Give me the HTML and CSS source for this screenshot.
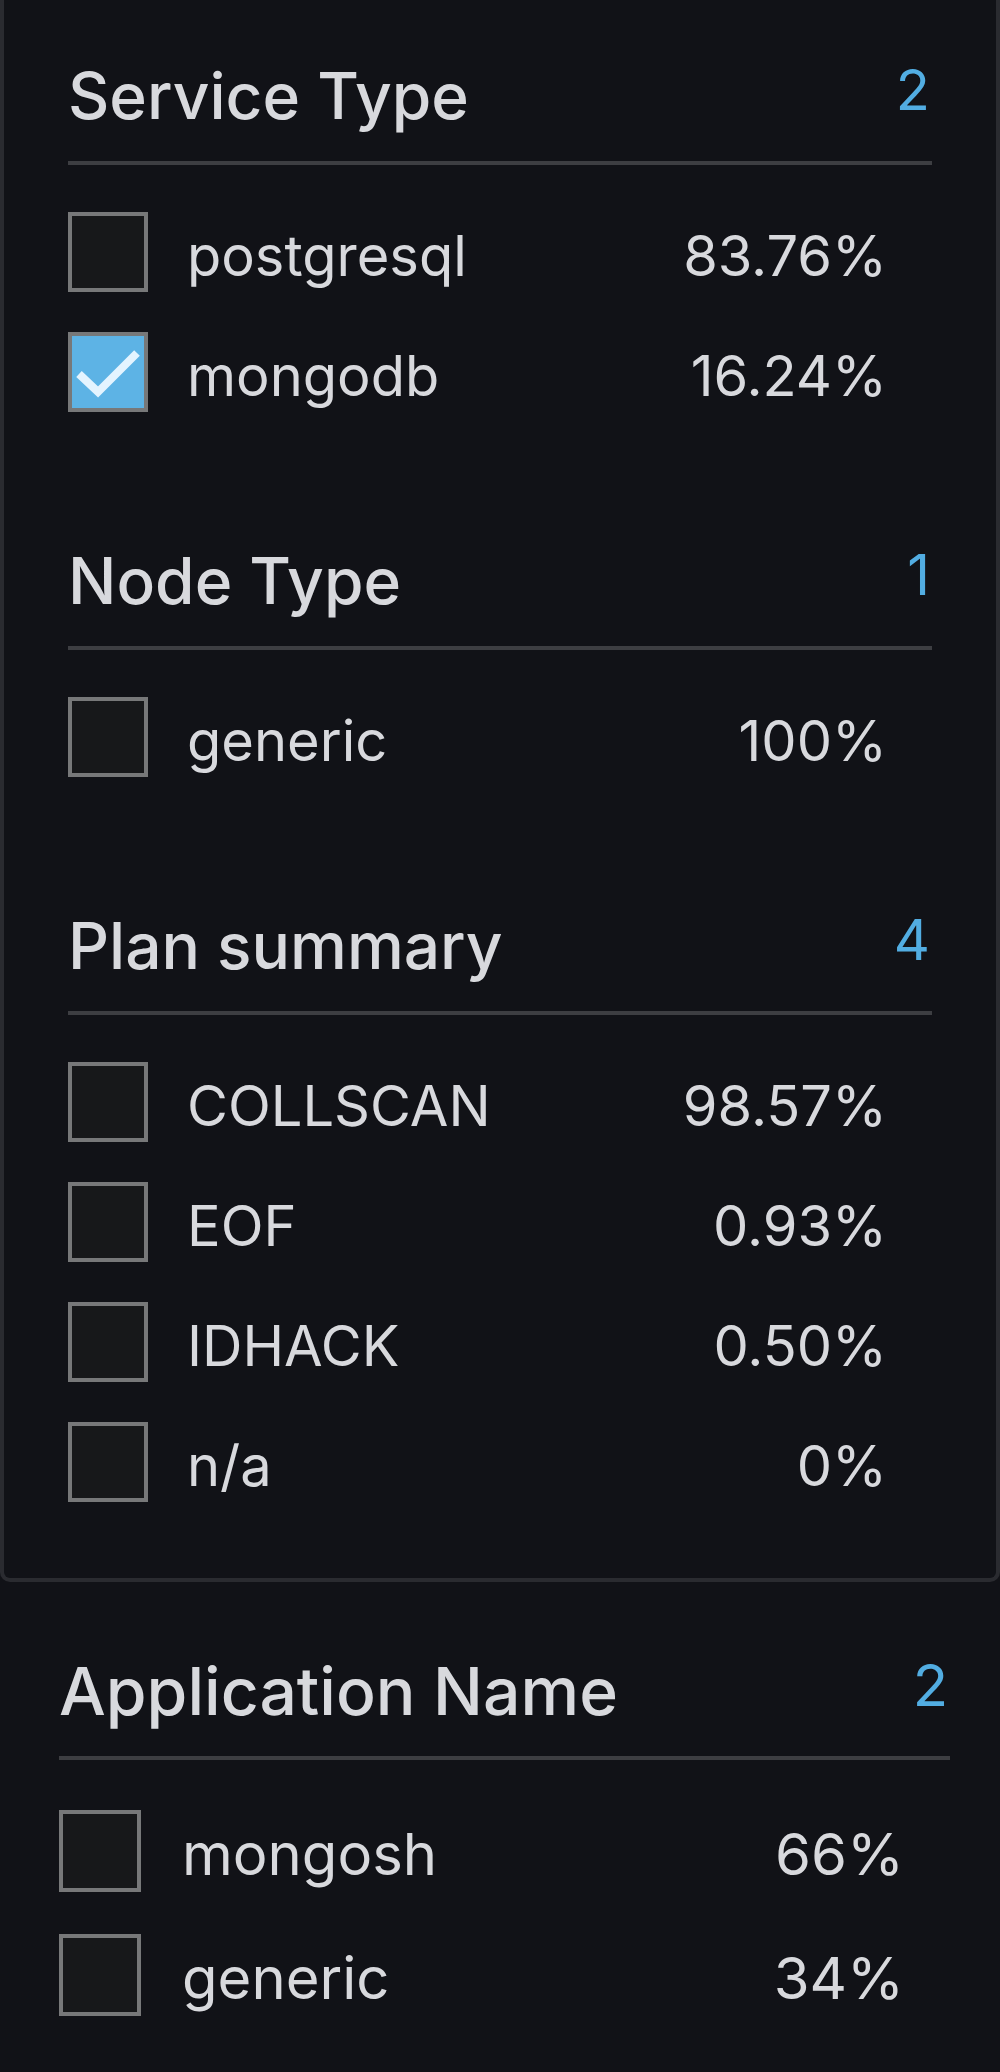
FILE: index.html
```html
<!DOCTYPE html>
<html>
<head>
<meta charset="utf-8">
<link rel="stylesheet" href="styles.css">
</head>
<body>
<div class="panel">
  <section class="group">
    <div class="group-head">
      <span class="group-title">Service Type</span>
      <span class="group-count">2</span>
    </div>
    <ul class="options">
      <li class="option"><span class="box"></span><span class="label">postgresql</span><span class="pct">83.76%</span></li>
      <li class="option"><span class="box checked"><svg viewBox="0 0 72 72" class="tick"><path d="M7 38 L26 56 L65 17" /></svg></span><span class="label">mongodb</span><span class="pct">16.24%</span></li>
    </ul>
  </section>
  <section class="group">
    <div class="group-head">
      <span class="group-title">Node Type</span>
      <span class="group-count">1</span>
    </div>
    <ul class="options">
      <li class="option"><span class="box"></span><span class="label">generic</span><span class="pct">100%</span></li>
    </ul>
  </section>
  <section class="group">
    <div class="group-head">
      <span class="group-title">Plan summary</span>
      <span class="group-count">4</span>
    </div>
    <ul class="options">
      <li class="option"><span class="box"></span><span class="label">COLLSCAN</span><span class="pct">98.57%</span></li>
      <li class="option"><span class="box"></span><span class="label">EOF</span><span class="pct">0.93%</span></li>
      <li class="option"><span class="box"></span><span class="label">IDHACK</span><span class="pct">0.50%</span></li>
      <li class="option"><span class="box"></span><span class="label">n/a</span><span class="pct">0%</span></li>
    </ul>
  </section>
</div>
<section class="group outer">
  <div class="group-head">
    <span class="group-title">Application Name</span>
    <span class="group-count">2</span>
  </div>
  <ul class="options">
    <li class="option"><span class="box"></span><span class="label">mongosh</span><span class="pct">66%</span></li>
    <li class="option"><span class="box"></span><span class="label">generic</span><span class="pct">34%</span></li>
  </ul>
</section>
</body>
</html>
```
FILE: styles.css
```css
html, body {
  margin: 0;
  padding: 0;
  background: #111217;
}
body {
  font-family: Inter, "Noto Sans", sans-serif;
  color: #d8d9dd;
  width: 1000px;
  height: 2072px;
  overflow: hidden;
}
.panel {
  box-sizing: border-box;
  width: 1000px;
  border: 4px solid #2a2b30;
  border-top: none;
  border-radius: 0 0 10px 10px;
  padding: 56px 64px 56px 64px;
  background: #111217;
}
.group + .group {
  margin-top: 109px;
}
.group-head {
  display: flex;
  justify-content: space-between;
  align-items: flex-start;
  padding-bottom: 25px;
  border-bottom: 4px solid #3d3e42;
}
.group-title {
  font-size: 64px;
  line-height: 80px;
  font-weight: 500;
  letter-spacing: 0;
}
.group-count {
  font-size: 56px;
  line-height: 68px;
  color: #52ade2;
  padding-right: 2px;
}
.options {
  list-style: none;
  margin: 0;
  padding: 27px 0 0 0;
}
.option {
  display: flex;
  align-items: center;
  height: 120px;
  padding-right: 45px;
  font-size: 56px;
}
.box {
  box-sizing: border-box;
  flex: none;
  width: 80px;
  height: 80px;
  border: 4px solid #777879;
  background: #17181a;
  display: flex;
}
.box.checked {
  background: #5db3e5;
}
.tick {
  width: 72px;
  height: 72px;
  fill: none;
  stroke: #e4f4ff;
  stroke-width: 8;
}
.label {
  flex: 1;
  padding-left: 39px;
  padding-top: 8px;
  line-height: 68px;
}
.pct {
  padding-top: 8px;
  line-height: 68px;
  text-align: right;
}
.outer {
  margin-top: 68px;
  padding: 0 50px 0 59px;
}
.outer .group-title {
  font-size: 66px;
  line-height: 82px;
}
.outer .group-count {
  font-size: 58px;
  line-height: 70px;
}
.outer .group-head {
  padding-bottom: 24px;
}
.outer .options {
  padding-top: 29px;
}
.outer .option {
  height: 124px;
  font-size: 58px;
  padding-right: 46px;
}
.outer .box {
  width: 82px;
  height: 82px;
}
.outer .label {
  padding-left: 41px;
  padding-top: 5px;
}
.outer .pct {
  padding-top: 5px;
}
```
